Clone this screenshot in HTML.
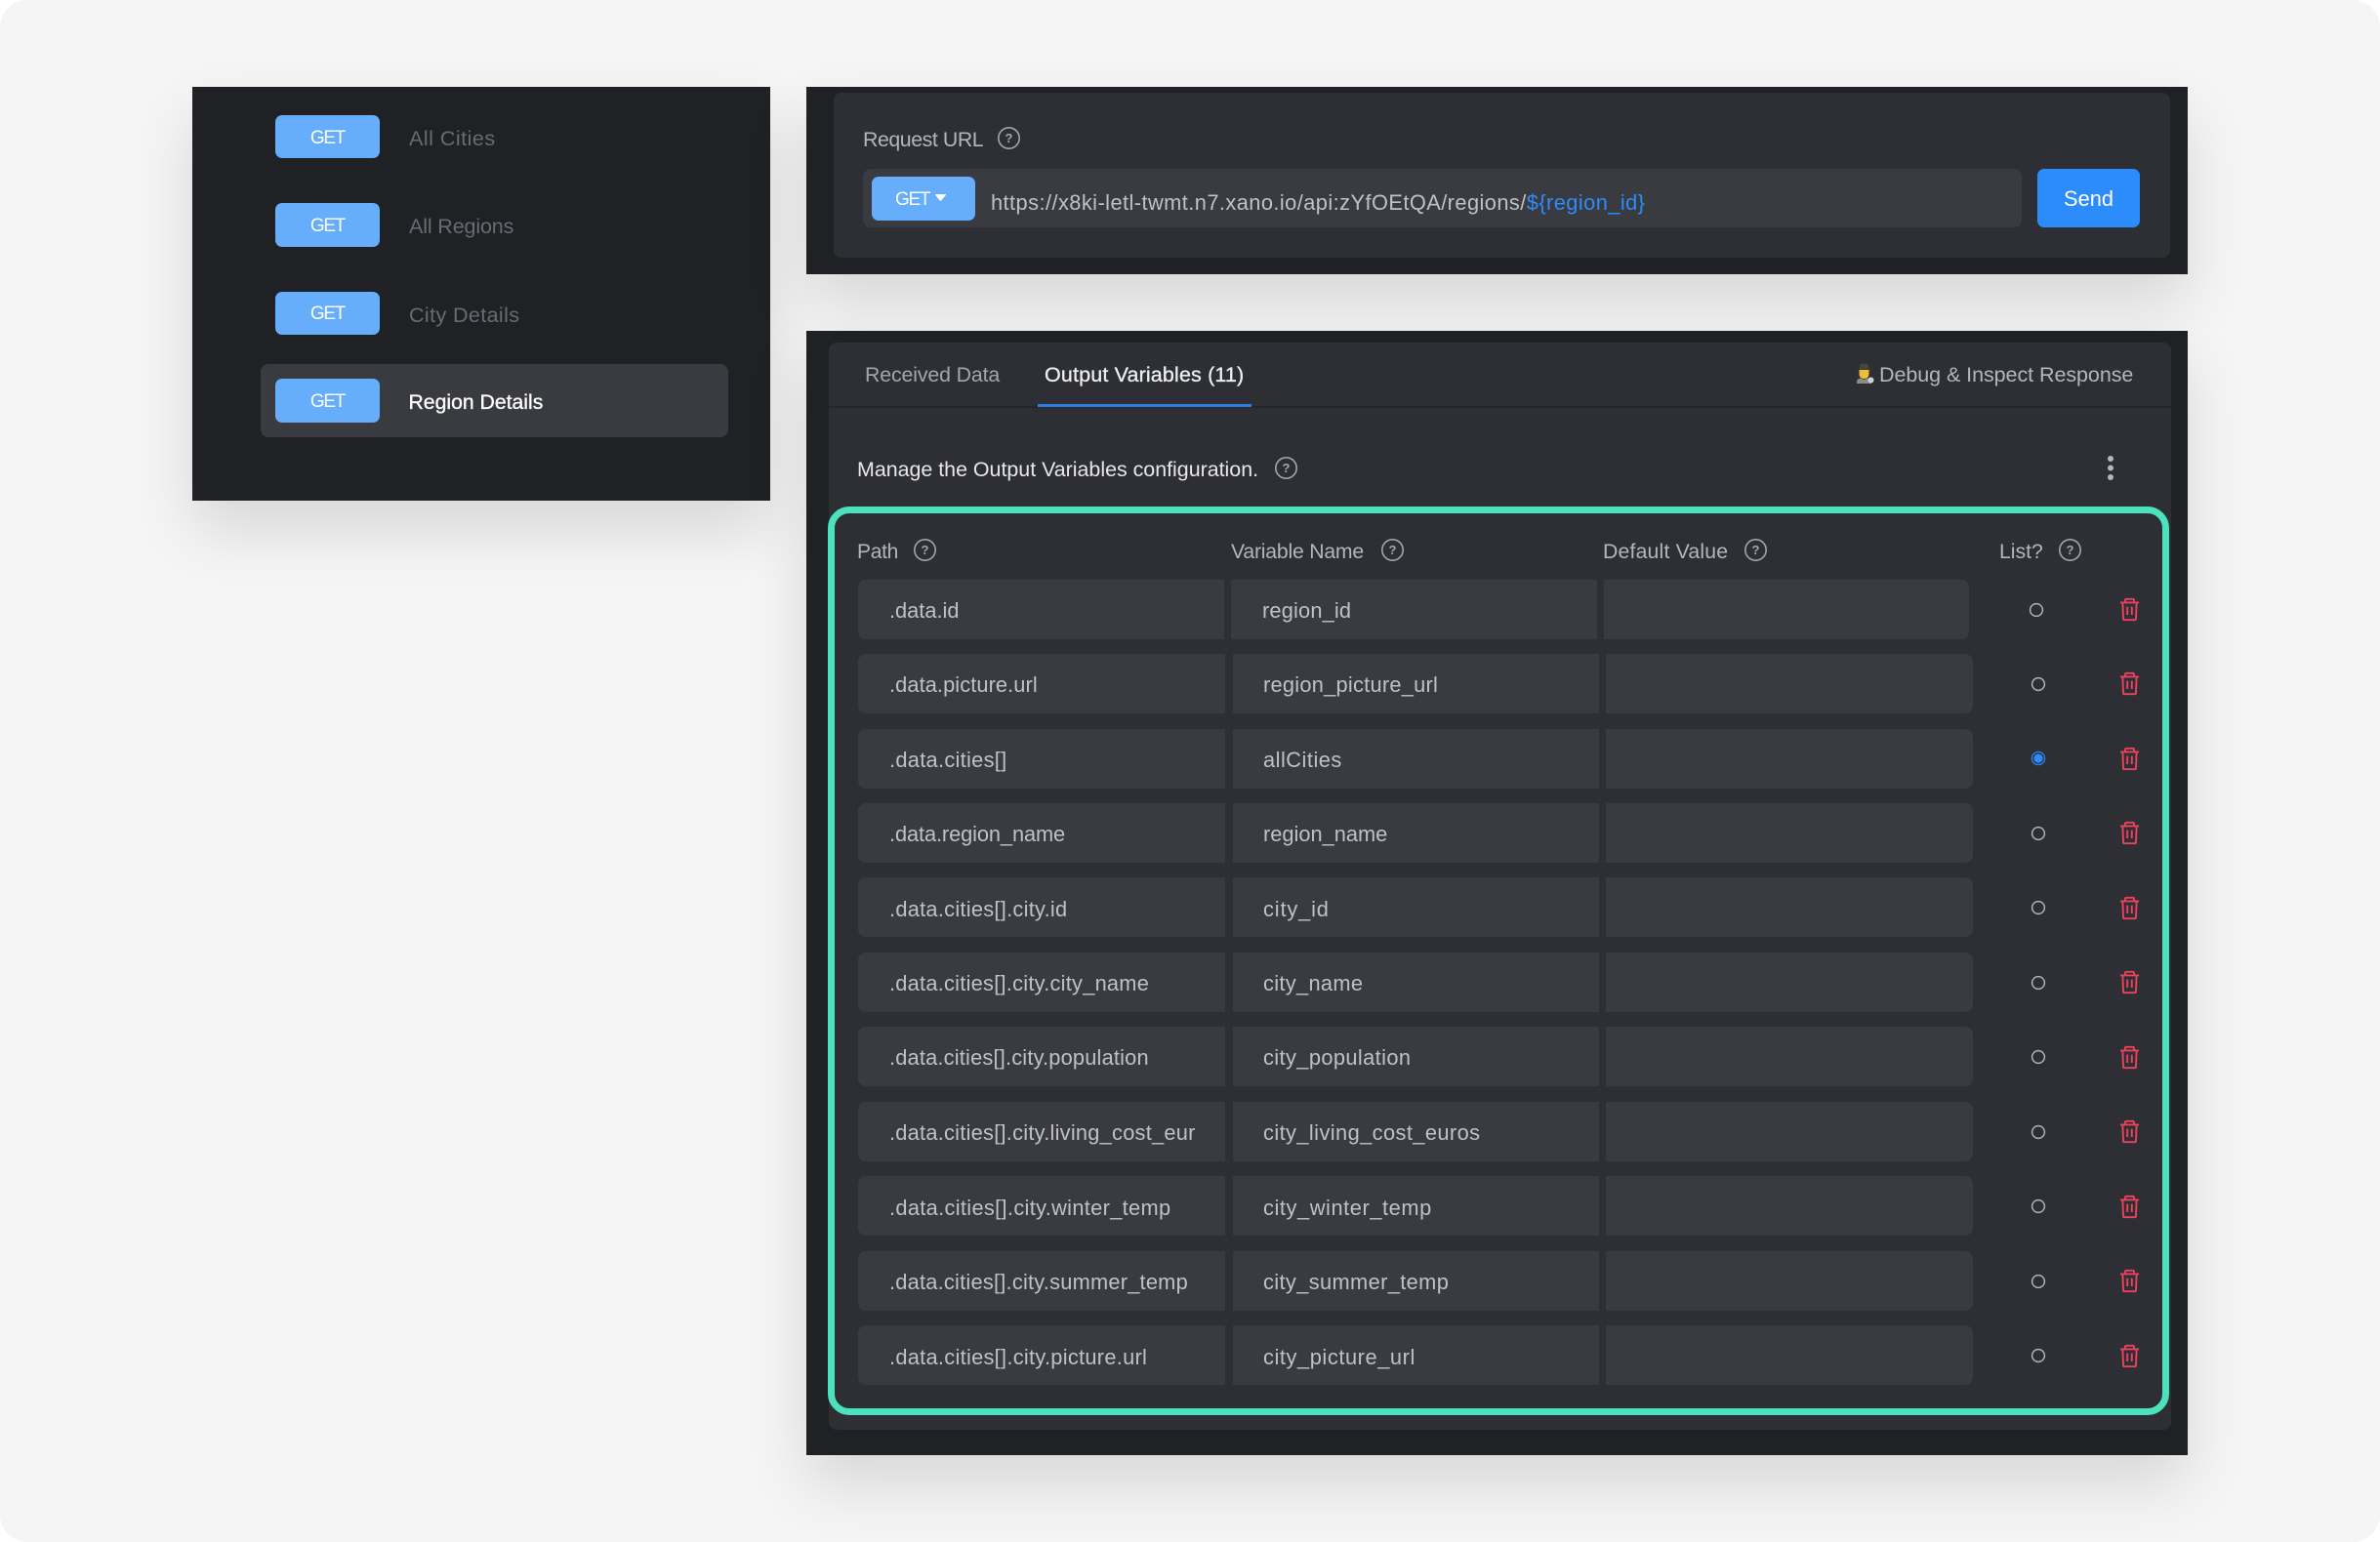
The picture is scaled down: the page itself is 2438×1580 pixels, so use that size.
<!DOCTYPE html>
<html lang="en">
<head>
<meta charset="utf-8">
<title>Output Variables</title>
<style>
html,body{margin:0;padding:0;background:#fff}
body{width:2438px;height:1580px;overflow:hidden;position:relative;font-family:"Liberation Sans",sans-serif;font-size:21.8px}
#bg{position:absolute;left:0;top:0;width:2438px;height:1580px;background:#f5f5f5;border-radius:28px;overflow:hidden}
.p{position:absolute;background:#202125;box-shadow:0 30px 60px rgba(0,0,0,.12)}
.i{position:absolute;background:#2e2f34}
.b{position:absolute;background:#66aefb;border-radius:7px}
.t{position:absolute;white-space:nowrap;line-height:30px;height:30px}
.get{position:absolute;color:#fff;font-size:19px;letter-spacing:-1.3px;text-align:center;line-height:44px;left:282px;width:107px}
.c{position:absolute;background:#3a3b40;height:61px}
.r{color:#c0c1c4}
.h{color:#b5b6ba}
svg{position:absolute;display:block;overflow:visible}
</style>
</head>
<body>
<div id="bg">

<svg width="0" height="0" style="position:absolute">
<defs>
<symbol id="help" viewBox="0 0 23 23" overflow="visible"><circle cx="11.5" cy="11.5" r="10.700" fill="none" stroke="#a5a6aa" stroke-width="1.6"/><text x="11.5" y="16" font-family="Liberation Sans,sans-serif" font-size="13" font-weight="700" fill="#a5a6aa" text-anchor="middle">?</text></symbol>
<symbol id="trash" viewBox="0 0 19 23" overflow="visible"><g fill="none" stroke="#ec425e" stroke-width="1.9" stroke-linejoin="round"><path d="M0 4.4H19"/><path d="M5 4.4V2Q5 .8 6.2 .8H12.8Q14 .8 14 2V4.4"/><path d="M2.4 4.4L3 21Q3 22.2 4.2 22.2H14.8Q16 22.2 16 21L16.6 4.4"/><path d="M7.2 8.6V17M11.8 8.6V17"/></g></symbol>
<symbol id="radio" viewBox="0 0 16 16" overflow="visible"><circle cx="8" cy="8" r="6.4" fill="none" stroke="#b0b1b4" stroke-width="1.5"/></symbol>
</defs>
</svg>

<!-- Left panel -->
<div class="p" style="left:197px;top:89px;width:592px;height:423.500px"></div>
<div style="position:absolute;left:267px;top:373px;width:479px;height:75px;background:#3a3b40;border-radius:8px"></div>
<div class="b" style="left:282px;top:118px;width:107px;height:44px"></div>
<div class="b" style="left:282px;top:208px;width:107px;height:45px"></div>
<div class="b" style="left:282px;top:299px;width:107px;height:44px"></div>
<div class="b" style="left:282px;top:388px;width:107px;height:45px"></div>
<div class="get" style="top:120px">GET</div>
<div class="get" style="top:210px">GET</div>
<div class="get" style="top:300px">GET</div>
<div class="get" style="top:390px">GET</div>
<div class="t" style="left:419px;top:127px;color:#6a6b72;font-size:21.5px;letter-spacing:.5px">All Cities</div>
<div class="t" style="left:419px;top:217px;color:#6a6b72;font-size:21.5px;letter-spacing:-.14px">All Regions</div>
<div class="t" style="left:419px;top:308px;color:#6a6b72;font-size:21.5px;letter-spacing:.39px">City Details</div>
<div class="t" style="left:418.500px;top:398px;color:#fff;font-size:21.2px;-webkit-text-stroke:.35px #fff">Region Details</div>

<!-- Request panel -->
<div class="p" style="left:826px;top:89px;width:1415px;height:191.500px"></div>
<div class="i" style="left:854px;top:95px;width:1369px;height:169px;border-radius:8px"></div>
<div class="t h" style="left:884px;top:128px;font-size:21.3px;letter-spacing:-.42px">Request URL</div>
<svg style="left:1022px;top:130px" width="23" height="23"><use href="#help" width="23" height="23"/></svg>
<div style="position:absolute;left:884px;top:173px;width:1187px;height:60px;background:#3a3b40;border-radius:8px"></div>
<div class="b" style="left:893px;top:181px;width:106px;height:45px"></div>
<div class="t" style="left:917px;top:190px;color:#fff;font-size:19px;letter-spacing:-1.3px">GET</div>
<svg style="left:958px;top:199px" width="11" height="7"><path d="M.5 .5H10.5L5.5 6.5Z" fill="#fff" stroke="#fff" stroke-linejoin="round"/></svg>
<div class="t r" style="left:1015px;top:192.500px;font-size:21.8px;letter-spacing:.44px">https://x8ki-letl-twmt.n7.xano.io/api:zYfOEtQA/regions/<span style="color:#2d8cfb">${region_id}</span></div>
<div style="position:absolute;left:2087px;top:173px;width:105px;height:60px;background:#2d8cfb;border-radius:7px"></div>
<div class="t" style="left:2087px;top:189px;width:105px;text-align:center;color:#fff;font-size:21.8px">Send</div>

<!-- Output panel -->
<div class="p" style="left:826px;top:339px;width:1415px;height:1152px"></div>
<div class="i" style="left:849px;top:351px;width:1375px;height:1114px;border-radius:8px"></div>
<div style="position:absolute;left:849px;top:416px;width:1375px;height:2px;background:#25262a"></div>
<div style="position:absolute;left:1063px;top:414px;width:219px;height:3px;background:#2d7ee6"></div>
<div class="t" style="left:886px;top:369px;color:#a5a6aa;font-size:21.3px;letter-spacing:-.12px">Received Data</div>
<div class="t" style="left:1070px;top:369px;color:#f0f0f1;font-size:21.5px;letter-spacing:.15px;-webkit-text-stroke:.3px #f0f0f1">Output Variables (11)</div>
<svg style="left:1900px;top:372px" width="20" height="24" viewBox="0 0 20 24"><ellipse cx="9.500" cy="6.500" rx="7.500" ry="1.500" fill="#3b3a36"/><path d="M5 6V2.500Q5 .5 9.500 .5T14 2.500V6Z" fill="#45433e"/><path d="M4.500 7H14.500V11Q14.500 16 9.500 16T4.500 11Z" fill="#f0bd36"/><path d="M2 21V19Q2 16.500 5.500 15.500L9.500 17L13.500 15.500Q17 16.500 17 19V21Z" fill="#8d8a80"/><circle cx="16.500" cy="17.500" r="2.500" fill="#b8d4e6" stroke="#d9d9d9"/></svg>
<div class="t" style="left:1925px;top:369px;color:#b5b6ba;font-size:21.5px;letter-spacing:-.06px">Debug &amp; Inspect Response</div>
<div class="t" style="left:878px;top:466px;color:#e8e8ea;font-size:21.4px">Manage the Output Variables configuration.</div>
<svg style="left:1306px;top:468px" width="23" height="23"><use href="#help" width="23" height="23"/></svg>
<svg style="left:2157px;top:466px" width="10" height="28"><circle cx="5" cy="4" r="3" fill="#b5b6ba"/><circle cx="5" cy="13.500" r="3" fill="#b5b6ba"/><circle cx="5" cy="23" r="3" fill="#b5b6ba"/></svg>

<!-- Green outline -->
<div style="position:absolute;left:848px;top:519px;width:1360px;height:917px;border:7.5px solid #4be3bd;border-radius:22px"></div>

<!-- Table headers -->
<div class="t h" style="left:878px;top:551px;font-size:21px;letter-spacing:-.3px">Path</div>
<svg style="left:936px;top:552px" width="23" height="23"><use href="#help" width="23" height="23"/></svg>
<div class="t h" style="left:1261px;top:551px;font-size:21.2px;letter-spacing:-.2px">Variable Name</div>
<svg style="left:1415px;top:552px" width="23" height="23"><use href="#help" width="23" height="23"/></svg>
<div class="t h" style="left:1642px;top:551px;font-size:21.2px;letter-spacing:.2px">Default Value</div>
<svg style="left:1787px;top:552px" width="23" height="23"><use href="#help" width="23" height="23"/></svg>
<div class="t h" style="left:2048px;top:551px;font-size:21.2px">List?</div>
<svg style="left:2109px;top:552px" width="23" height="23"><use href="#help" width="23" height="23"/></svg>

<!-- Row 1 -->
<div class="c" style="left:879px;top:594px;width:375px;border-radius:8px 0 0 8px"></div>
<div class="c" style="left:1261px;top:594px;width:375px"></div>
<div class="c" style="left:1643px;top:594px;width:374px;border-radius:0 8px 8px 0"></div>
<div class="t r" style="left:911px;top:611px">.data.id</div>
<div class="t r" style="left:1293px;top:611px;letter-spacing:.17px">region_id</div>
<svg style="left:2078px;top:617px" width="16" height="16"><use href="#radio" width="16" height="16"/></svg>
<svg style="left:2172px;top:613px" width="19" height="23"><use href="#trash" width="19" height="23"/></svg>

<!-- Row 2 -->
<div class="c" style="left:879px;top:670px;width:376px;border-radius:8px 0 0 8px"></div>
<div class="c" style="left:1262.500px;top:670px;width:375.500px"></div>
<div class="c" style="left:1645px;top:670px;width:376px;border-radius:0 8px 8px 0"></div>
<div class="t r" style="left:911px;top:687px;letter-spacing:.09px">.data.picture.url</div>
<div class="t r" style="left:1294px;top:687px;letter-spacing:.26px">region_picture_url</div>
<svg style="left:2080px;top:693px" width="16" height="16"><use href="#radio" width="16" height="16"/></svg>
<svg style="left:2172px;top:689px" width="19" height="23"><use href="#trash" width="19" height="23"/></svg>

<!-- Row 3 -->
<div class="c" style="left:879px;top:746.500px;width:376px;border-radius:8px 0 0 8px"></div>
<div class="c" style="left:1262.500px;top:746.500px;width:375.500px"></div>
<div class="c" style="left:1645px;top:746.500px;width:376px;border-radius:0 8px 8px 0"></div>
<div class="t r" style="left:911px;top:763.500px;letter-spacing:.3px">.data.cities[]</div>
<div class="t r" style="left:1294px;top:763.500px;letter-spacing:.5px">allCities</div>
<svg style="left:2080px;top:769px" width="16" height="16" viewBox="0 0 16 16"><circle cx="8" cy="8" r="6.6" fill="none" stroke="#2d7ee6" stroke-width="1.4"/><circle cx="8" cy="8" r="4.6" fill="#2d8cfb"/></svg>
<svg style="left:2172px;top:766px" width="19" height="23"><use href="#trash" width="19" height="23"/></svg>

<!-- Row 4 -->
<div class="c" style="left:879px;top:823px;width:376px;border-radius:8px 0 0 8px"></div>
<div class="c" style="left:1262.500px;top:823px;width:375.500px"></div>
<div class="c" style="left:1645px;top:823px;width:376px;border-radius:0 8px 8px 0"></div>
<div class="t r" style="left:911px;top:840px;letter-spacing:-.1px">.data.region_name</div>
<div class="t r" style="left:1294px;top:840px">region_name</div>
<svg style="left:2080px;top:846px" width="16" height="16"><use href="#radio" width="16" height="16"/></svg>
<svg style="left:2172px;top:842px" width="19" height="23"><use href="#trash" width="19" height="23"/></svg>

<!-- Row 5 -->
<div class="c" style="left:879px;top:899px;width:376px;border-radius:8px 0 0 8px"></div>
<div class="c" style="left:1262.500px;top:899px;width:375.500px"></div>
<div class="c" style="left:1645px;top:899px;width:376px;border-radius:0 8px 8px 0"></div>
<div class="t r" style="left:911px;top:916.500px;letter-spacing:.27px">.data.cities[].city.id</div>
<div class="t r" style="left:1294px;top:916.500px;letter-spacing:.85px">city_id</div>
<svg style="left:2080px;top:922px" width="16" height="16"><use href="#radio" width="16" height="16"/></svg>
<svg style="left:2172px;top:919px" width="19" height="23"><use href="#trash" width="19" height="23"/></svg>

<!-- Row 6 -->
<div class="c" style="left:879px;top:976px;width:376px;border-radius:8px 0 0 8px"></div>
<div class="c" style="left:1262.500px;top:976px;width:375.500px"></div>
<div class="c" style="left:1645px;top:976px;width:376px;border-radius:0 8px 8px 0"></div>
<div class="t r" style="left:911px;top:993px;letter-spacing:.25px">.data.cities[].city.city_name</div>
<div class="t r" style="left:1294px;top:993px;letter-spacing:.33px">city_name</div>
<svg style="left:2080px;top:999px" width="16" height="16"><use href="#radio" width="16" height="16"/></svg>
<svg style="left:2172px;top:995px" width="19" height="23"><use href="#trash" width="19" height="23"/></svg>

<!-- Row 7 -->
<div class="c" style="left:879px;top:1052px;width:376px;border-radius:8px 0 0 8px"></div>
<div class="c" style="left:1262.500px;top:1052px;width:375.500px"></div>
<div class="c" style="left:1645px;top:1052px;width:376px;border-radius:0 8px 8px 0"></div>
<div class="t r" style="left:911px;top:1069px;letter-spacing:.19px">.data.cities[].city.population</div>
<div class="t r" style="left:1294px;top:1069px;letter-spacing:.4px">city_population</div>
<svg style="left:2080px;top:1075px" width="16" height="16"><use href="#radio" width="16" height="16"/></svg>
<svg style="left:2172px;top:1072px" width="19" height="23"><use href="#trash" width="19" height="23"/></svg>

<!-- Row 8 -->
<div class="c" style="left:879px;top:1129px;width:376px;border-radius:8px 0 0 8px"></div>
<div class="c" style="left:1262.500px;top:1129px;width:375.500px"></div>
<div class="c" style="left:1645px;top:1129px;width:376px;border-radius:0 8px 8px 0"></div>
<div class="t r" style="left:911px;top:1146px;width:313px;overflow:hidden;letter-spacing:.25px">.data.cities[].city.living_cost_euros</div>
<div class="t r" style="left:1294px;top:1146px;letter-spacing:.42px">city_living_cost_euros</div>
<svg style="left:2080px;top:1152px" width="16" height="16"><use href="#radio" width="16" height="16"/></svg>
<svg style="left:2172px;top:1148px" width="19" height="23"><use href="#trash" width="19" height="23"/></svg>

<!-- Row 9 -->
<div class="c" style="left:879px;top:1205px;width:376px;border-radius:8px 0 0 8px"></div>
<div class="c" style="left:1262.500px;top:1205px;width:375.500px"></div>
<div class="c" style="left:1645px;top:1205px;width:376px;border-radius:0 8px 8px 0"></div>
<div class="t r" style="left:911px;top:1222.500px;letter-spacing:.33px">.data.cities[].city.winter_temp</div>
<div class="t r" style="left:1294px;top:1222.500px;letter-spacing:.58px">city_winter_temp</div>
<svg style="left:2080px;top:1228px" width="16" height="16"><use href="#radio" width="16" height="16"/></svg>
<svg style="left:2172px;top:1225px" width="19" height="23"><use href="#trash" width="19" height="23"/></svg>

<!-- Row 10 -->
<div class="c" style="left:879px;top:1282px;width:376px;border-radius:8px 0 0 8px"></div>
<div class="c" style="left:1262.500px;top:1282px;width:375.500px"></div>
<div class="c" style="left:1645px;top:1282px;width:376px;border-radius:0 8px 8px 0"></div>
<div class="t r" style="left:911px;top:1299px;letter-spacing:.23px">.data.cities[].city.summer_temp</div>
<div class="t r" style="left:1294px;top:1299px;letter-spacing:.38px">city_summer_temp</div>
<svg style="left:2080px;top:1305px" width="16" height="16"><use href="#radio" width="16" height="16"/></svg>
<svg style="left:2172px;top:1301px" width="19" height="23"><use href="#trash" width="19" height="23"/></svg>

<!-- Row 11 -->
<div class="c" style="left:879px;top:1358px;width:376px;border-radius:8px 0 0 8px"></div>
<div class="c" style="left:1262.500px;top:1358px;width:375.500px"></div>
<div class="c" style="left:1645px;top:1358px;width:376px;border-radius:0 8px 8px 0"></div>
<div class="t r" style="left:911px;top:1375.500px;letter-spacing:.29px">.data.cities[].city.picture.url</div>
<div class="t r" style="left:1294px;top:1375.500px;letter-spacing:.58px">city_picture_url</div>
<svg style="left:2080px;top:1381px" width="16" height="16"><use href="#radio" width="16" height="16"/></svg>
<svg style="left:2172px;top:1378px" width="19" height="23"><use href="#trash" width="19" height="23"/></svg>

</div>
</body>
</html>
